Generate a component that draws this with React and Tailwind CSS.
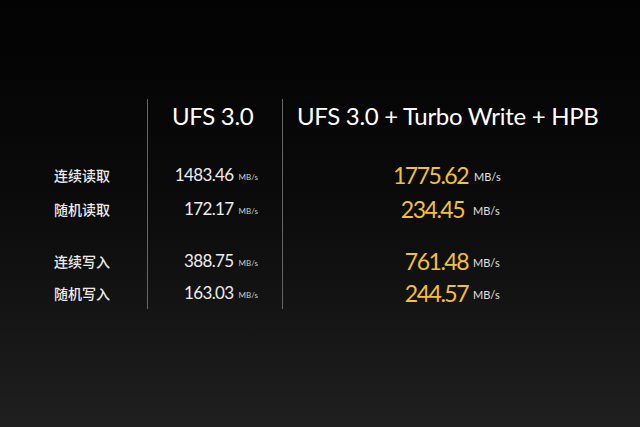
import React from "react";

const rows = [
  { label: "连续读取", base: "1483.46", turbo: "1775.62", gap: "ml-[6px]", h: "h-[38px]" },
  { label: "随机读取", base: "172.17", turbo: "234.45", gap: "ml-[9px]", shift: "w-[181px]", h: "h-[30px]" },
  { label: null, h: "h-[21px]" },
  { label: "连续写入", base: "388.75", turbo: "761.48", gap: "ml-[5px]", h: "h-[32px]" },
  { label: "随机写入", base: "163.03", turbo: "244.57", gap: "ml-[5px]", h: "h-[32px]" },
];

const font = { fontFamily: "Lato, 'Noto Sans CJK SC', sans-serif" };

export default function App() {
  return (
    <div
      className="w-[640px] h-[427px] overflow-hidden text-white bg-gradient-to-b from-[#030303] via-[#0c0c0c] to-[#1f1f1f]"
      style={font}
    >
      <div className="pt-[99px] grid grid-cols-[147px_135px_1fr]">
        {/* header */}
        <div className="h-[57px]" />
        <div className="h-[57px] border-l border-[#666] pl-[24px] pt-[1px] text-[24px] leading-[32px] tracking-[-0.3px]">
          UFS 3.0
        </div>
        <div className="h-[57px] border-l border-[#666] pl-[14px] pt-[1px] text-[24px] leading-[32px] tracking-[-0.3px] whitespace-nowrap">
          UFS 3.0 + Turbo Write + HPB
        </div>

        {rows.map((r, i) => (
          <React.Fragment key={i}>
            <div className={`${r.h} pl-[54px] flex items-center text-[14px] font-medium text-[#ececec]`}>
              {r.label}
            </div>
            <div className={`${r.h} border-l border-[#666] flex items-center justify-end pr-[24px]`}>
              {r.label && (
                <>
                  <span className="text-[17px] tracking-[-0.6px] text-[#ededed]">{r.base}</span>
                  <span className="ml-[5px] mt-[3px] text-[8px] text-[#cfcfcf]">MB/s</span>
                </>
              )}
            </div>
            <div className={`${r.h} border-l border-[#666] flex items-center`}>
              {r.label && (
                <>
                  <span className={`${r.shift || "w-[185px]"} text-right text-[23px] tracking-[-1.5px] text-[#f3c22f]`}>
                    {r.turbo}
                  </span>
                  <span className={`${r.gap} mt-[4px] text-[11px] text-[#e0e0e0]`}>MB/s</span>
                </>
              )}
            </div>
          </React.Fragment>
        ))}
      </div>
    </div>
  );
}
